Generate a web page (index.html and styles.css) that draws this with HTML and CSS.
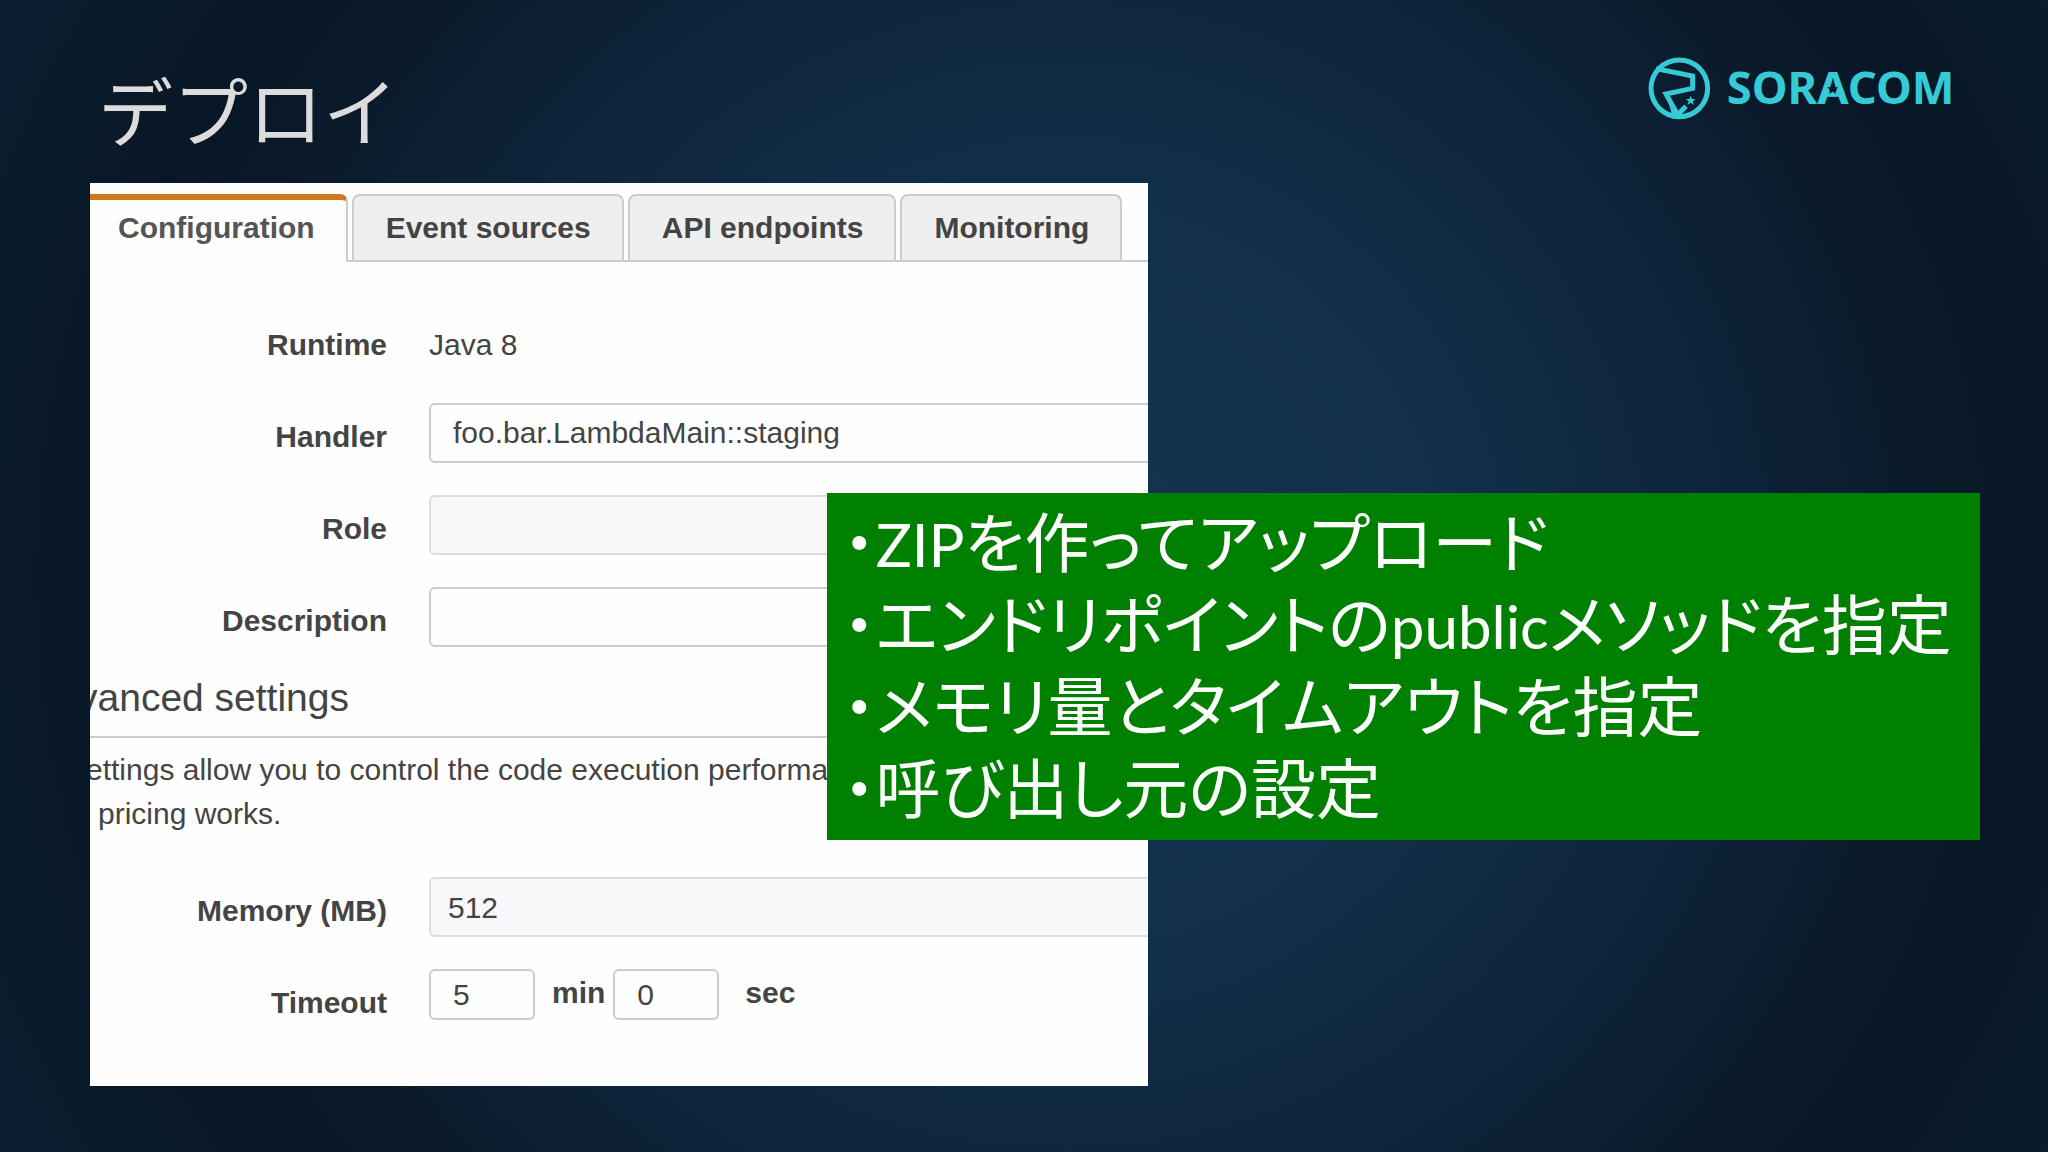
FILE: index.html
```html
<!DOCTYPE html>
<html lang="ja">
<head>
    <meta charset="UTF-8">
    <meta name="viewport" content="width=device-width, initial-scale=1.0">
    <title>デプロイ</title>
    <link rel="stylesheet" href="styles.css">
</head>
<body>
    <div class="slide">
        <header class="slide-header">
            <h1>デプロイ</h1>
            <svg class="logo" viewBox="54 50 960 195" role="img" aria-label="SORACOM">
                <circle cx="148" cy="147" r="85" fill="none" stroke="#35cbd6" stroke-width="15"/>
                <path d="M78 88 L188 110 V147 L108 164 L143 226 L168 201" fill="none" stroke="#35cbd6" stroke-width="15"/>
                <path d="M112 178 L162 238 L130 238 Z" fill="#35cbd6"/>
                <path d="M182 169 l4 10 11 0 -9 7 4 11 -10 -7 -10 7 4 -11 -9 -7 11 0z" fill="#35cbd6"/>
                <text class="logo-text" x="290" y="194">SORACOM</text>
                <path class="logo-star" d="M608 132 l4 12 13 0 -10 8 4 13 -11 -8 -11 8 4 -13 -10 -8 13 0z"/>
            </svg>
        </header>

        <main class="content">
            <section class="console">
                <nav class="tabs">
                    <button class="tab active" type="button">Configuration</button>
                    <button class="tab" type="button">Event sources</button>
                    <button class="tab" type="button">API endpoints</button>
                    <button class="tab" type="button">Monitoring</button>
                </nav>
                <form class="settings">
                    <div class="rows">
                        <div class="row">
                            <span class="label">Runtime</span>
                            <span class="value">Java 8</span>
                        </div>
                        <div class="row">
                            <label class="label" for="handler">Handler</label>
                            <input class="field" id="handler" type="text" value="foo.bar.LambdaMain::staging">
                        </div>
                        <div class="row">
                            <label class="label" for="role">Role</label>
                            <select class="field" id="role"><option></option></select>
                        </div>
                        <div class="row">
                            <label class="label" for="description">Description</label>
                            <input class="field" id="description" type="text">
                        </div>
                    </div>

                    <h2>vanced settings</h2>
                    <div class="help">
                        <p>ettings allow you to control the code execution performa</p>
                        <p class="help-end">pricing works.</p>
                    </div>

                    <div class="rows">
                        <div class="row">
                            <label class="label" for="memory">Memory (MB)</label>
                            <select class="field" id="memory"><option>512</option></select>
                        </div>
                        <div class="row">
                            <label class="label" for="minutes">Timeout</label>
                            <div class="timeout">
                                <input class="field small" id="minutes" type="text" value="5">
                                <label class="unit" for="minutes">min</label>
                                <input class="field small" id="seconds" type="text" value="0">
                                <label class="unit last" for="seconds">sec</label>
                            </div>
                        </div>
                    </div>
                </form>
            </section>

            <div class="note">
                <p>・<span class="latin">ZIP</span>を作ってアップロード</p>
                <p>・エンドリポイントの<span class="latin">public</span>メソッドを指定</p>
                <p>・メモリ量とタイムアウトを指定</p>
                <p>・呼び出し元の設定</p>
            </div>
        </main>
    </div>
</body>
</html>
```

FILE: styles.css
```css
* {
    box-sizing: border-box;
}

body {
    margin: 0;
    font-family: "Liberation Sans", Arial, sans-serif;
    font-size: 30px;
    color: #444;
}

h1, h2, p {
    margin: 0;
    font-weight: normal;
}

.slide {
    min-height: 100vh;
    padding: 56px 68px 66px 90px;
    background: radial-gradient(60% 105% at 52% 50%, #14344f 0%, #12304b 30%, #0e2339 55%, #0a1a2a 70%, #081725 80%, #0b1f31 100%);
}

/* header */
.slide-header {
    display: flex;
    justify-content: space-between;
    align-items: flex-start;
    height: 127px;
}

.slide-header h1 {
    padding-left: 8px;
    font-family: "Noto Sans CJK JP", sans-serif;
    font-size: 75px;
    line-height: 106px;
    color: #dcdcdc;
}

.logo {
    width: 320px;
    height: 65px;
    margin-right: 12px;
}

.logo-text {
    font-family: "Noto Sans", sans-serif;
    font-size: 136px;
    font-weight: 700;
    fill: #35cbd6;
}

.logo-star {
    fill: #0a1928;
}

.content {
    position: relative;
}

/* settings panel */
.console {
    width: 56%;
    padding: 11px 0 57px;
    background: #fefefe;
    overflow: hidden;
}

.tabs {
    display: flex;
    gap: 4px;
    border-bottom: 2px solid #ccc;
}

.tab {
    height: 66px;
    padding: 0 31px 0 32px;
    border: 2px solid #ccc;
    border-bottom: none;
    border-radius: 8px 8px 0 0;
    background: #efefef;
    font-family: inherit;
    font-size: 30px;
    font-weight: bold;
    color: #444;
    white-space: nowrap;
}

.tab.active {
    height: 68px;
    margin-bottom: -2px;
    padding: 0 31px 6px 28px;
    border-top: 6px solid #cf7a1e;
    border-left: none;
    border-top-left-radius: 0;
    background: #fefefe;
    color: #555;
}

.settings {
    padding-top: 49px;
}

.rows {
    display: grid;
    gap: 32px;
}

.row {
    display: grid;
    grid-template-columns: 297px 1fr;
    column-gap: 42px;
    height: 60px;
    line-height: 60px;
}

.label {
    padding-top: 4px;
    font-weight: bold;
    text-align: right;
}

.value {
    padding-top: 4px;
}

/* the wide fields run on past the edge of the panel */
.field {
    height: 60px;
    margin: 0 -8px 0 0;
    padding: 0 22px;
    border: 2px solid #ccc;
    border-radius: 6px;
    background: #fefefe;
    font-family: inherit;
    font-size: 30px;
    color: #444;
}

select.field {
    appearance: none;
    padding: 0 17px;
    border-color: #ddd;
    background: #f8f7fa;
}

.field.small {
    width: 106px;
    height: 51px;
    margin: 0;
}

.timeout {
    display: flex;
    align-items: flex-start;
}

.unit {
    padding: 0 8px 0 17px;
    line-height: 48px;
    font-weight: bold;
}

.unit.last {
    padding-left: 26px;
}

h2 {
    margin: 29px 0 10px;
    padding-bottom: 16px;
    border-bottom: 2px solid #ccc;
    font-size: 39px;
    line-height: 44px;
    text-indent: -12px;
}

.help {
    margin-bottom: 41px;
    line-height: 44px;
    text-indent: -4px;
    white-space: nowrap;
}

.help-end {
    text-indent: 8px;
}

/* callout lying over the panel */
.note {
    position: absolute;
    top: 310px;
    right: 0;
    width: 61%;
    padding: 5px 16px 14px;
    background: #008000;
    color: #fff;
    font-family: "Noto Sans CJK JP", sans-serif;
    font-size: 65px;
    font-feature-settings: "palt";
    line-height: 82px;
    white-space: nowrap;
}

.latin {
    font-family: Lato, sans-serif;
    font-size: 60px;
    line-height: 1;
}
```
